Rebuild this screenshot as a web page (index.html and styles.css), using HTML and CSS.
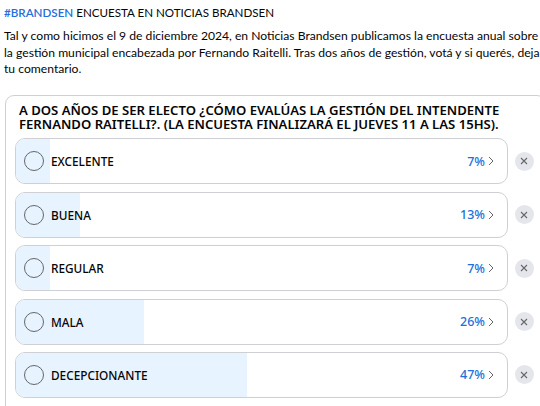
FILE: index.html
```html
<!DOCTYPE html>
<html>
<head>
  <title>Encuesta Noticias Brandsen</title>
  <link rel="stylesheet" href="styles.css">
</head>
<body>
  <div class="page">
    <div class="post-head"><span class="tag">#BRANDSEN</span> ENCUESTA EN NOTICIAS BRANDSEN</div>
    <p class="post-text">
      <span class="line first">Tal y como hicimos el 9 de diciembre 2024, en Noticias Brandsen publicamos la encuesta anual sobre</span>
      <span class="line">la gestión municipal encabezada por Fernando Raitelli. Tras dos años de gestión, votá y si querés, dejar</span>
      <span class="line">tu comentario.</span>
    </p>

    <div class="poll">
      <h2 class="poll-title">A DOS AÑOS DE SER ELECTO ¿CÓMO EVALÚAS LA GESTIÓN DEL INTENDENTE FERNANDO RAITELLI?. (LA ENCUESTA FINALIZARÁ EL JUEVES 11 A LAS 15HS).</h2>

      <div class="option-row">
        <div class="option">
          <div class="bar" style="width: 7%"></div>
          <span class="radio"></span>
          <span class="label">EXCELENTE</span>
          <span class="pct">7%</span>
          <svg class="chev" width="6" height="10" viewBox="0 0 6 10"><polyline points="1,1 5,5 1,9" /></svg>
        </div>
        <button class="remove"><svg width="10" height="10" viewBox="0 0 10 10"><path d="M2 2 L8 8 M8 2 L2 8" /></svg></button>
      </div>

      <div class="option-row">
        <div class="option">
          <div class="bar" style="width: 13%"></div>
          <span class="radio"></span>
          <span class="label">BUENA</span>
          <span class="pct">13%</span>
          <svg class="chev" width="6" height="10" viewBox="0 0 6 10"><polyline points="1,1 5,5 1,9" /></svg>
        </div>
        <button class="remove"><svg width="10" height="10" viewBox="0 0 10 10"><path d="M2 2 L8 8 M8 2 L2 8" /></svg></button>
      </div>

      <div class="option-row">
        <div class="option">
          <div class="bar" style="width: 7%"></div>
          <span class="radio"></span>
          <span class="label">REGULAR</span>
          <span class="pct">7%</span>
          <svg class="chev" width="6" height="10" viewBox="0 0 6 10"><polyline points="1,1 5,5 1,9" /></svg>
        </div>
        <button class="remove"><svg width="10" height="10" viewBox="0 0 10 10"><path d="M2 2 L8 8 M8 2 L2 8" /></svg></button>
      </div>

      <div class="option-row">
        <div class="option">
          <div class="bar" style="width: 26%"></div>
          <span class="radio"></span>
          <span class="label">MALA</span>
          <span class="pct">26%</span>
          <svg class="chev" width="6" height="10" viewBox="0 0 6 10"><polyline points="1,1 5,5 1,9" /></svg>
        </div>
        <button class="remove"><svg width="10" height="10" viewBox="0 0 10 10"><path d="M2 2 L8 8 M8 2 L2 8" /></svg></button>
      </div>

      <div class="option-row">
        <div class="option">
          <div class="bar" style="width: 47%"></div>
          <span class="radio"></span>
          <span class="label">DECEPCIONANTE</span>
          <span class="pct">47%</span>
          <svg class="chev" width="6" height="10" viewBox="0 0 6 10"><polyline points="1,1 5,5 1,9" /></svg>
        </div>
        <button class="remove"><svg width="10" height="10" viewBox="0 0 10 10"><path d="M2 2 L8 8 M8 2 L2 8" /></svg></button>
      </div>
    </div>
  </div>
</body>
</html>
```

FILE: styles.css
```css
html, body {
  margin: 0;
  padding: 0;
  overflow: hidden;
  background: #fff;
}
.page {
  width: 560px;
  padding: 5px 0 0 4px;
  font-family: Lato, "Noto Sans", sans-serif;
  color: #050505;
}
.post-head {
  font-size: 11.6px;
  line-height: 16px;
}
.tag {
  color: #216fdb;
  font-weight: 600;
}
.post-text {
  margin: 7px 0 0 0;
  font-size: 12.15px;
  line-height: 16.5px;
}
.post-text .line {
  display: block;
  white-space: nowrap;
}
.post-text .first {
  width: 534px;
  text-align: justify;
  text-align-last: justify;
}
.poll {
  margin: 17px 0 0 1px;
  width: 520px;
  border: 1px solid #ced0d4;
  border-radius: 9px;
  padding: 8.6px 10px 10px 9px;
}
.poll-title {
  margin: 0 0 7.4px 4px;
  font-family: "Noto Sans", sans-serif;
  font-size: 13.1px;
  line-height: 13.5px;
  font-weight: 600;
}
.option-row {
  display: flex;
  align-items: center;
  gap: 6.5px;
  margin-bottom: 7.35px;
}
.option {
  position: relative;
  box-sizing: border-box;
  flex: 0 0 493px;
  height: 46px;
  border: 1px solid #ced0d4;
  border-radius: 10px;
  overflow: hidden;
  display: flex;
  align-items: center;
  padding: 0 13px 0 8px;
}
.bar {
  position: absolute;
  left: 0;
  top: 0;
  bottom: 0;
  background: #e7f3ff;
}
.radio {
  position: relative;
  width: 18px;
  height: 18px;
  border: 1px solid #65676b;
  border-radius: 50%;
  flex: none;
}
.label {
  position: relative;
  margin-left: 7px;
  font-family: "Noto Sans", sans-serif;
  font-size: 11.8px;
  font-weight: 500;
  flex: 1;
}
.pct {
  position: relative;
  color: #216fdb;
  font-family: "Noto Sans", sans-serif;
  font-size: 12.5px;
  font-weight: 500;
}
.chev {
  position: relative;
  margin-left: 3px;
  fill: none;
  stroke: #65676b;
  stroke-width: 1;
}
.remove {
  width: 19px;
  height: 19px;
  border: none;
  border-radius: 50%;
  background: #e4e6eb;
  padding: 0;
  display: flex;
  align-items: center;
  justify-content: center;
  flex: none;
}
.remove svg {
  stroke: #65676b;
  stroke-width: 1.1;
}
```
